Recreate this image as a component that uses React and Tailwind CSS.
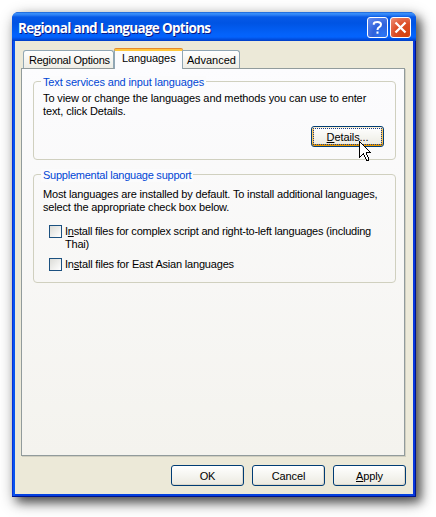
import clsx from 'clsx';

const Key = ({ children }) => <span className="underline decoration-1 underline-offset-1">{children}</span>;

const Button = ({ children, focused, className }) => (
  <button
    className={clsx(
      'relative flex h-[21px] w-[73px] items-center justify-center rounded-[3px] border border-[#003c74] bg-linear-to-b from-white via-[#f5f5f0] to-[#ebe9e0] pt-px tracking-[-0.1px]',
      focused ? 'shadow-[inset_0_1px_#fff0cf,inset_0_-2px_#e59700,inset_2px_0_#fbc761,inset_-2px_0_#fbc761]' : 'shadow-[inset_-1px_-1px_#dcd8cb]',
      className
    )}
  >
    {focused && <span className="absolute inset-px border border-dotted border-[#1c3f8c]" />}
    <span>{children}</span>
  </button>
);

const Group = ({ title, titleClass, className, children }) => (
  <section className={clsx('relative rounded-[4px] border border-[#d0d0bf]', className)}>
    <h2 className="absolute top-[-6px] left-[7px] bg-[#fbfbfc] px-0.5 leading-[13px] whitespace-nowrap text-[#0046d5]">
      <span className={titleClass}>{title}</span>
    </h2>
    {children}
  </section>
);

const CheckRow = ({ children, className }) => (
  <div className={clsx('ml-[6px] flex gap-[3px] whitespace-nowrap', className)}>
    <span className="size-[13px] shrink-0 border border-[#1c5180] bg-linear-to-br from-[#dcdcd7] to-white" />
    <div>{children}</div>
  </div>
);

const Cursor = () => (
  <svg className="absolute top-[15px] left-[48px]" width="13" height="21" viewBox="0 0 13 21" shapeRendering="crispEdges">
    <path d="M0.5 0.5V16.5L4.5 12.5L7.5 19.5H9.5V17.5L7.5 12.5V11.5H11.5Z" fill="#fff" stroke="#000" />
  </svg>
);

const TitleBar = () => (
  <header className="flex h-[29px] shrink-0 items-center rounded-t-[6px] bg-[linear-gradient(#0b4fc4_0,#3c92fb_1px,#2d80f5_3px,#0759e6_5px,#0054e3_11px,#0362fa_22px,#0363fd_25px,#0147d5_28px,#003dc4_29px)] pr-[5px] pl-[6px]">
    <h1 className="flex-1 pt-[3px] font-['Open_Sans',sans-serif] text-[13.5px] leading-[18px] font-bold tracking-[-0.69px] whitespace-nowrap text-white [text-shadow:1px_1px_#0a1883]">
      Regional and Language Options
    </h1>
    <div className="flex gap-[2px] pt-px">
      <span className="flex size-[21px] items-center justify-center rounded-[3px] border border-white bg-[radial-gradient(circle_at_80%_90%,#2b76f5,#2f62dc_45%,#668df0)]">
        <svg width="19" height="19" viewBox="0 0 19 19" fill="none" stroke="#fff" strokeWidth="2">
          <path d="M5.8 6.8V5.5Q6.2 4 9.5 4Q13 4 13 6.5Q13 8 11.2 9.2Q9.5 10.2 9.5 12" />
          <path d="M9.5 13.5V15.7" />
        </svg>
      </span>
      <span className="flex size-[21px] items-center justify-center rounded-[3px] border border-white bg-[radial-gradient(circle_at_80%_90%,#d64310,#dc4c25_50%,#ee927a)]">
        <svg width="19" height="19" viewBox="0 0 19 19" stroke="#fff" strokeWidth="2.3">
          <path d="M4.5 4.5L14.5 14.5M14.5 4.5L4.5 14.5" />
        </svg>
      </span>
    </div>
  </header>
);

const tabBase = 'border border-b-0 border-[#91a7b4] whitespace-nowrap';

export default function App() {
  return (
    <div className="h-[517px] w-[436px] overflow-hidden bg-white pt-3 pl-3 font-['Liberation_Sans',Arial,sans-serif] text-[11px] leading-[13px] text-black">
      <div className="flex h-[485px] w-[404px] flex-col rounded-t-[7px] bg-[#0831d9] shadow-[5px_5px_10px_rgba(0,0,0,0.5),3px_5px_16px_rgba(0,0,0,0.42)]">
        <TitleBar />
        <div className="flex-1 bg-[#0441e0] px-[3px] pb-[3px] shadow-[inset_0_-1px_#00138c,inset_1px_0_#0831d9,inset_3px_0_#0855ee,inset_-1px_0_#00138c,inset_-3px_0_#0837dc]">
          <div className="h-full bg-[#ece9d8] pt-[7px] pl-[6px]">
            <nav className="relative z-10 flex h-[21px] items-end pl-[2px]">
              <div className={clsx(tabBase, 'mb-px h-[18px] w-[91px] rounded-t-[3px] bg-linear-to-b from-white to-[#eeede5] pt-[3px] pl-[5px]')}>
                <span className="tracking-[-0.22px]">Regional Options</span>
              </div>
              <div className={clsx(tabBase, 'h-[20px] w-[69px] rounded-t-[2px] border-t-2 border-t-[#ffc73c] bg-[#fcfcfe] pt-[1px] pl-[7px] shadow-[0_-1px_#e68b2c]')}>
                <span className="tracking-[-0.1px]">Languages</span>
              </div>
              <div className={clsx(tabBase, 'mb-px h-[18px] w-[57px] rounded-tr-[3px] border-l-0 bg-linear-to-b from-white to-[#eeede5] pt-[3px] pl-[4px]')}>
                <span>Advanced</span>
              </div>
            </nav>
            <main className="-mt-px h-[388px] w-[384px] border border-[#919b9c] bg-linear-to-b from-[#fcfcfe] to-[#f4f3ee] pt-[12px] pl-[11px] shadow-[1px_1px_#d0cebf]">
              <Group title="Text services and input languages" titleClass="tracking-[-0.14px]" className="h-[79px] w-[363px] pt-[10px] pl-[9px]">
                <p className="tracking-[-0.11px] whitespace-nowrap">
                  To view or change the languages and methods you can use to enter
                  <br />
                  text, click Details.
                </p>
                <div className="relative mt-[8px] ml-[268px] w-[73px]">
                  <Button focused>
                    <Key>D</Key>etails...
                  </Button>
                  <Cursor />
                </div>
              </Group>
              <Group title="Supplemental language support" titleClass="tracking-[-0.24px]" className="mt-[14px] h-[109px] w-[363px] pt-[13px] pl-[9px]">
                <p className="tracking-[-0.165px] whitespace-nowrap">
                  Most languages are installed by default. To install additional languages,
                  <br />
                  select the appropriate check box below.
                </p>
                <CheckRow className="mt-[11px] tracking-[-0.22px]">
                  I<Key>n</Key>stall files for complex script and right-to-left languages (including
                  <br />
                  Thai)
                </CheckRow>
                <CheckRow className="mt-[7px] tracking-[-0.19px]">
                  In<Key>s</Key>tall files for East Asian languages
                </CheckRow>
              </Group>
            </main>
            <footer className="mt-[9px] flex gap-2 pl-[150px]">
              <Button>OK</Button>
              <Button>Cancel</Button>
              <Button>
                <Key>A</Key>pply
              </Button>
            </footer>
          </div>
        </div>
      </div>
    </div>
  );
}
